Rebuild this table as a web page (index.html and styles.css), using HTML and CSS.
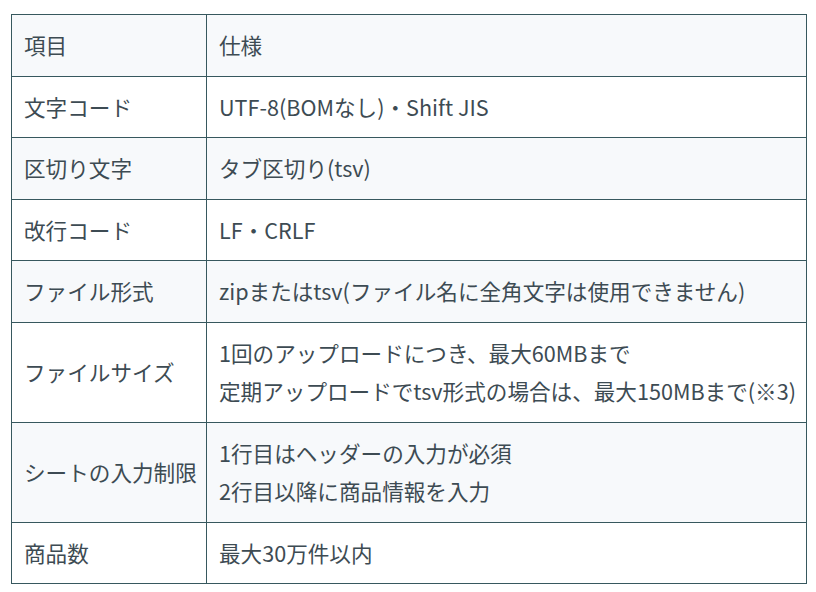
FILE: index.html
```html
<!DOCTYPE html>
<html lang="ja">
<head>
<meta charset="utf-8">
<link rel="stylesheet" href="styles.css">
</head>
<body>
<table class="spec">
<tbody>
<tr><td class="key">項目</td><td>仕様</td></tr>
<tr><td class="key">文字コード</td><td>UTF-8(BOMなし)・Shift JIS</td></tr>
<tr><td class="key">区切り文字</td><td>タブ区切り(tsv)</td></tr>
<tr><td class="key">改行コード</td><td>LF・CRLF</td></tr>
<tr><td class="key">ファイル形式</td><td>zipまたはtsv(ファイル名に全角文字は使用できません)</td></tr>
<tr><td class="key">ファイルサイズ</td><td>1回のアップロードにつき、最大60MBまで<br>定期アップロードでtsv形式の場合は、最大150MBまで(※3)</td></tr>
<tr><td class="key">シートの入力制限</td><td>1行目はヘッダーの入力が必須<br>2行目以降に商品情報を入力</td></tr>
<tr><td class="key">商品数</td><td>最大30万件以内</td></tr>
</tbody>
</table>
</body>
</html>
```
FILE: styles.css
```css
html, body {
  margin: 0;
  padding: 0;
  background: #ffffff;
}
body {
  padding: 14px 0 0 11px;
  font-family: "Noto Sans CJK JP", "Noto Sans", sans-serif;
  font-size: 21.6px;
  color: #3d4b53;
}
.spec {
  border-collapse: collapse;
  width: 796px;
  table-layout: fixed;
}
.spec td {
  border: 1px solid #37585e;
  padding: 11px 12px;
  line-height: 38.5px;
  vertical-align: middle;
  text-align: left;
  white-space: nowrap;
}
.spec td.key {
  width: 170px;
}
.spec tr:nth-child(odd) td {
  background: #f7f9fb;
}
```
